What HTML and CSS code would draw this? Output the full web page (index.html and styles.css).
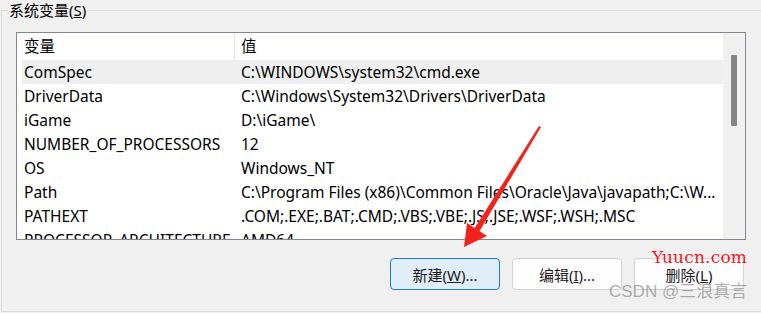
FILE: index.html
```html
<!DOCTYPE html>
<html lang="zh-CN">
<head>
    <meta charset="UTF-8">
    <title>系统变量</title>
    <link rel="stylesheet" href="styles.css">
</head>
<body>
    <fieldset class="group">
        <legend>系统变量(<u>S</u>)</legend>

        <div class="listbox">
            <div class="table">
                <div class="row head">
                    <div class="cell">变量</div>
                    <div class="cell">值</div>
                </div>
                <div class="row selected">
                    <div class="cell">ComSpec</div>
                    <div class="cell">C:\WINDOWS\system32\cmd.exe</div>
                </div>
                <div class="row">
                    <div class="cell">DriverData</div>
                    <div class="cell">C:\Windows\System32\Drivers\DriverData</div>
                </div>
                <div class="row">
                    <div class="cell">iGame</div>
                    <div class="cell">D:\iGame\</div>
                </div>
                <div class="row">
                    <div class="cell">NUMBER_OF_PROCESSORS</div>
                    <div class="cell">12</div>
                </div>
                <div class="row">
                    <div class="cell">OS</div>
                    <div class="cell">Windows_NT</div>
                </div>
                <div class="row">
                    <div class="cell">Path</div>
                    <div class="cell">C:\Program Files (x86)\Common Files\Oracle\Java\javapath;C:\W...</div>
                </div>
                <div class="row">
                    <div class="cell">PATHEXT</div>
                    <div class="cell">.COM;.EXE;.BAT;.CMD;.VBS;.VBE;.JS;.JSE;.WSF;.WSH;.MSC</div>
                </div>
                <div class="row">
                    <div class="cell">PROCESSOR_ARCHITECTURE</div>
                    <div class="cell">AMD64</div>
                </div>
            </div>
            <div class="scrollbar">
                <div class="thumb"></div>
            </div>
        </div>

        <div class="buttons">
            <button class="btn focused">新建(<u>W</u>)...</button>
            <button class="btn">编辑(<u>I</u>)...</button>
            <button class="btn">删除(<u>L</u>)</button>
        </div>
    </fieldset>

    <!-- annotations drawn over the screenshot -->
    <svg class="arrow" width="761" height="313" viewBox="0 0 761 313">
        <polygon points="539,126 541,127 479,232 474,229" fill="#f2231d"/>
        <polygon points="464,247 467,223 487,236" fill="#f2231d"/>
    </svg>
    <div class="mark-site">Yuucn.com</div>
    <div class="mark-csdn">CSDN @三浪真言</div>
</body>
</html>
```

FILE: styles.css
```css
* {
    box-sizing: border-box;
}

body {
    margin: 0;
    width: 761px;
    height: 313px;
    overflow: hidden;
    background: #f0f0f0;
    font-family: "Noto Sans", "Noto Sans CJK SC", sans-serif;
    font-size: 15.5px;
    color: #000;
    position: relative;
}

.group {
    margin: 0 -30px 0 1px;
    padding: 0;
    height: 312px;
    border: 1px solid #dcdcdc;
}

.group legend {
    margin-left: 6px;
    padding: 0 1px;
    font-size: 15px;
    line-height: 20px;
    height: 20px;
}

.listbox {
    margin: 12px 0 0 14px;
    width: 730px;
    height: 208px;
    border: 1px solid #828790;
    background: #fff;
    display: flex;
}

.table {
    flex: 1;
    overflow: hidden;
    padding-left: 5px;
}

.row {
    display: grid;
    grid-template-columns: 212px 488px;
    height: 24px;
    align-items: center;
    line-height: 24px;
    white-space: nowrap;
}

.row .cell {
    overflow: hidden;
    text-overflow: ellipsis;
}

.row .cell:first-child {
    padding-left: 2px;
}

.row .cell:last-child {
    padding-left: 7px;
}

.row.head {
    height: 27px;
    line-height: 27px;
}

.row.head .cell:last-child {
    border-left: 1px solid #e5e5e5;
    padding-left: 6px;
    height: 27px;
}

.row.selected {
    background: #efefef;
}

.scrollbar {
    width: 22px;
    background: #f0f0f0;
    padding: 22px 0 0 8px;
}

.thumb {
    width: 6px;
    height: 71px;
    background: #858585;
    border-radius: 1px;
}

.buttons {
    margin: 18px 0 0 14px;
    width: 730px;
    padding-right: 2px;
    display: flex;
    justify-content: flex-end;
    gap: 12px;
}

.btn {
    width: 110px;
    height: 32px;
    border: 1px solid #d3d3d3;
    border-radius: 4px;
    background: #fdfdfd;
    font-family: inherit;
    font-size: 15px;
    color: #1b1b1b;
    padding: 0;
}

.btn.focused {
    background: #e0eef9;
    border-color: #1f79d0;
}

.arrow {
    position: absolute;
    left: 0;
    top: 0;
    pointer-events: none;
}

.mark-site {
    position: absolute;
    left: 652px;
    top: 246px;
    font-family: "DejaVu Serif", serif;
    font-size: 17px;
    letter-spacing: 0.2px;
    line-height: 22px;
    color: #ee1c25;
}

.mark-csdn {
    position: absolute;
    left: 609px;
    top: 281px;
    font-family: "Liberation Sans", "Noto Sans CJK SC", sans-serif;
    font-size: 17px;
    line-height: 22px;
    color: rgba(120, 120, 120, 0.6);
}
```
